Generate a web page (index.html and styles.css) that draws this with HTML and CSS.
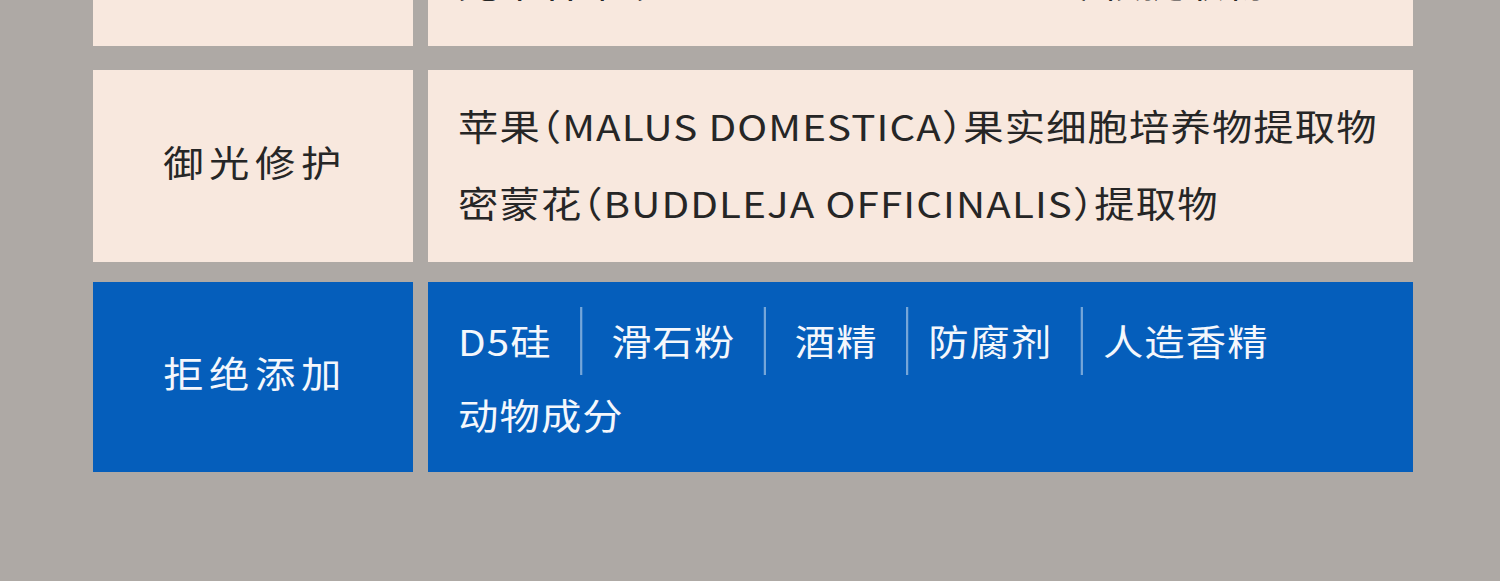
FILE: index.html
```html
<!DOCTYPE html>
<html>
    <head>
        <meta charset="UTF-8">
        <title>成分表</title>
        <link rel="stylesheet" href="styles.css">
    </head>
    <body>
        <div id="table">
            <!-- 上の行 (画面外に切れている) -->
            <div class="row first">
                <div class="label"><span>焕亮净澈</span></div>
                <div class="content">
                    <p>积雪草（CENTELLA ASIATICA）提取物</p>
                    <p>光果甘草（GLYCYRRHIZA GLABRA）根提取物</p>
                </div>
            </div>

            <div class="row">
                <div class="label"><span>御光修护</span></div>
                <div class="content">
                    <p>苹果（MALUS DOMESTICA）果实细胞培养物提取物</p>
                    <p>密蒙花（BUDDLEJA OFFICINALIS）提取物</p>
                </div>
            </div>

            <div class="row blue">
                <div class="label"><span>拒绝添加</span></div>
                <div class="content">
                    <div class="tags">
                        <span class="tag">D5硅</span>
                        <span class="tag">滑石粉</span>
                        <span class="tag">酒精</span>
                        <span class="tag narrow">防腐剂</span>
                        <span class="tag narrow">人造香精</span>
                    </div>
                    <p>动物成分</p>
                </div>
            </div>
        </div>
    </body>
</html>
```

FILE: styles.css
```css
* {
    box-sizing: border-box;
}

body {
    margin: 0;
    background-color: #aea9a5;
    font-family: "Noto Sans CJK SC", "Noto Sans", sans-serif;
    font-feature-settings: "halt";
    color: #262626;
}

p {
    margin: 0;
}

#table {
    width: 1320px;
    margin: -146px 0 0 93px;
    display: flex;
    flex-direction: column;
    gap: 20px;
}

.row {
    display: grid;
    grid-template-columns: 320px 985px;
    gap: 15px;
    height: 192px;
}

.row.first {
    margin-bottom: 4px;
}

.row > div {
    background-color: #f8e8de;
}

.label {
    display: flex;
    align-items: center;
    justify-content: center;
    padding: 0 0 10px 5px;
    font-size: 36px;
    letter-spacing: 5px;
}

.label span {
    display: inline-block;
    transform: scaleX(1.12);
}

.content {
    display: flex;
    flex-direction: column;
    justify-content: center;
    padding: 0 30px 4px;
    font-size: 36px;
    line-height: 77px;
    letter-spacing: 1px;
}

/* 元画像は横に少し引き伸ばされている */
.content p,
.tags {
    transform: scaleX(1.12);
    transform-origin: left center;
}

.first .content {
    padding-bottom: 13px;
}

.blue {
    height: 190px;
}

.blue > div {
    background-color: #055ebb;
    color: #f4f7fc;
}

.blue .content {
    justify-content: flex-start;
    line-height: 75px;
    padding: 25px 30px 0;
}

.blue .content p {
    margin-top: 2px;
}

.tags {
    display: flex;
    align-items: center;
}

.tag {
    height: 68px;
    line-height: 66px;
    padding: 0 25px 2px 26px;
    border-left: 2px solid rgba(255, 255, 255, 0.45);
}

.tag.narrow {
    padding-left: 18px;
}

.tag:first-child {
    padding-left: 0;
    border-left: none;
}
```
